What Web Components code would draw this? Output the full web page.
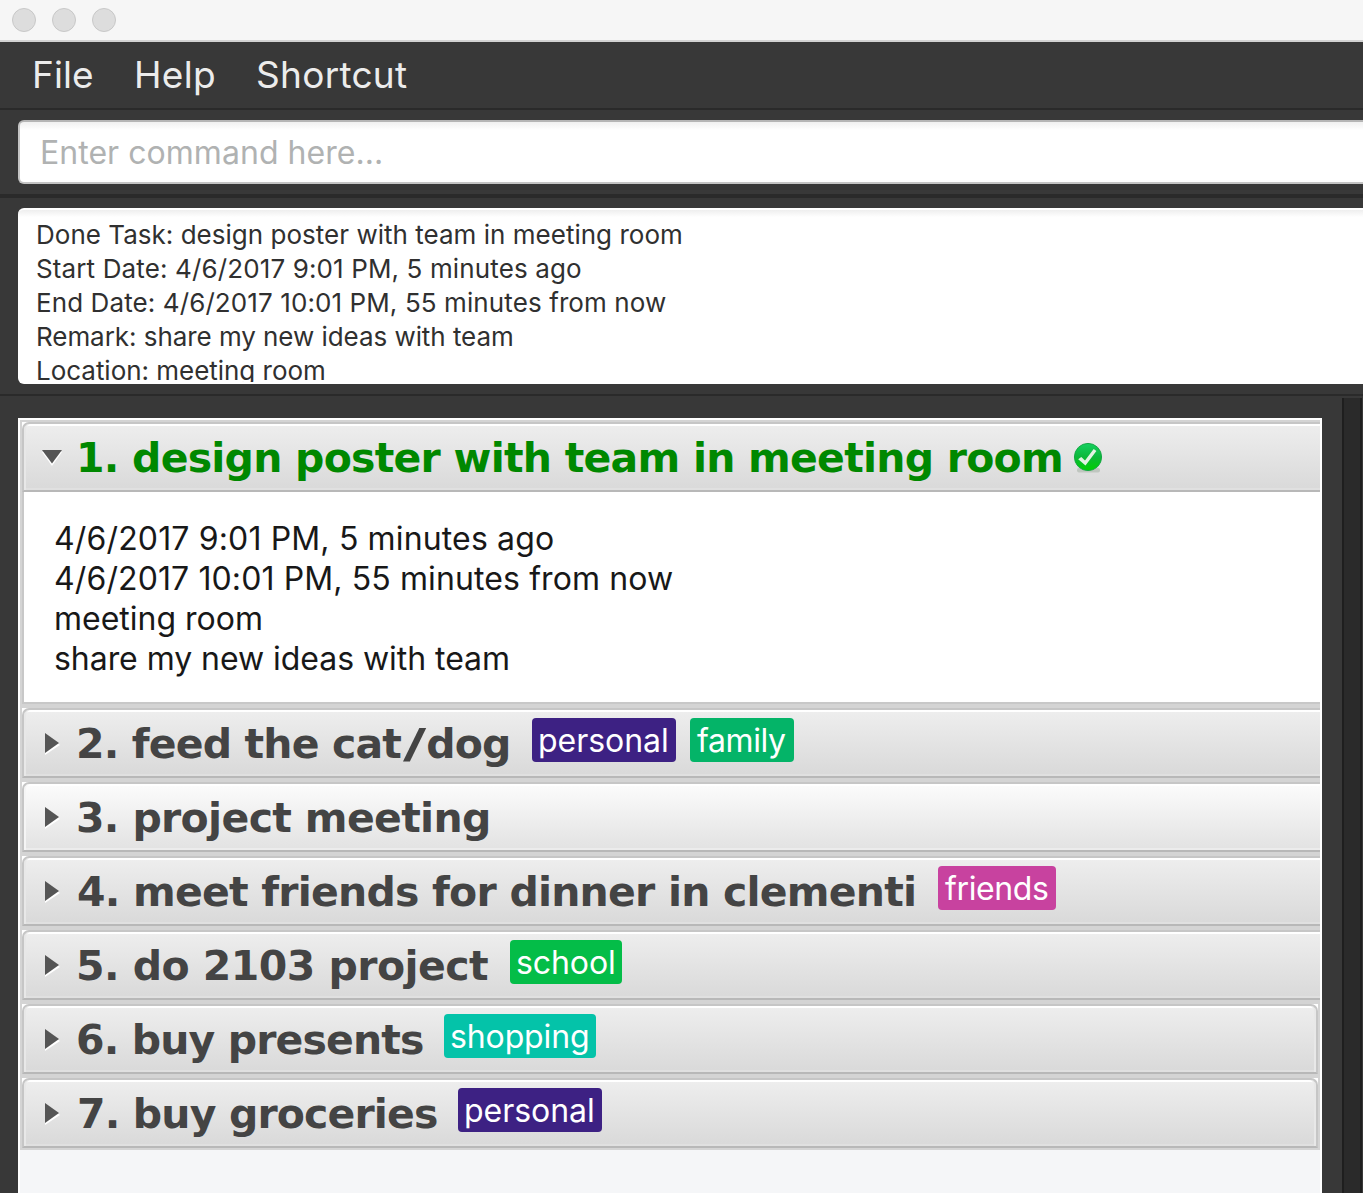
<!DOCTYPE html>
<html lang="en">
<head>
<meta charset="utf-8">
<title>Task Manager</title>
<style>
html,body{margin:0;height:1193px;overflow:hidden;background:#383838}
body{font-family:Inter,"Liberation Sans",sans-serif}
</style>
</head>
<body>
<task-window></task-window>
<script>
const def=(name,html,setup)=>{
  const t=document.createElement('template');t.innerHTML=html;
  customElements.define(name,class extends HTMLElement{
    connectedCallback(){
      if(this.shadowRoot)return;
      this.attachShadow({mode:'open'}).append(t.content.cloneNode(true));
      if(setup)setup(this,this.shadowRoot);
    }
  });
};
const ctx=document.createElement('canvas').getContext('2d');

// A single line of text tracked so that its ink fills the width in "w".
// "pad" widens the slashes in the text by that many pixels on each side.
def('fit-text',`<style>:host{display:block;white-space:pre;flex:none}::slotted(span){display:inline-block;transform:scaleX(1.55)}</style><slot></slot>`,el=>{
  const cs=getComputedStyle(el),s=el.textContent,w=+el.getAttribute('w'),pad=+el.getAttribute('pad')||0;
  ctx.font=`${cs.fontWeight} ${cs.fontSize} ${cs.fontFamily}`;
  const m=ctx.measureText(s),ink=m.actualBoundingBoxLeft+m.actualBoundingBoxRight;
  el.style.width=w+'px';
  el.style.textIndent=m.actualBoundingBoxLeft+'px';
  el.style.letterSpacing=(w-2*pad-ink)/(s.length-1)+'px';
  if(pad){
    const [a,b]=s.split('/'),sl=document.createElement('span');
    sl.textContent='/';sl.style.margin=`0 ${pad}px`;sl.style.textIndent='0';
    el.replaceChildren(a,sl,b);
  }
});

def('title-bar',`<style>
:host{display:flex;box-sizing:border-box;height:42px;flex:none;padding:8px 12px 0;gap:16px;background:#f6f6f6;border-bottom:2px solid #d2d2d2}
i{width:24px;height:24px;box-sizing:border-box;border-radius:50%;background:#dddddd;border:1px solid #c8c8c8}
</style><i></i><i></i><i></i>`);

def('menu-bar',`<style>
:host{display:flex;box-sizing:border-box;height:68px;flex:none;padding-left:35px;border-bottom:2px solid #2a2a2a;background:#383838;color:#ececec;font-size:37px;line-height:65px}
.help{margin-left:45px}.short{margin-left:44px}
</style><fit-text w="57">File</fit-text><fit-text class="help" w="77">Help</fit-text><fit-text class="short" w="149">Shortcut</fit-text>`);

def('command-box',`<style>
:host{display:block;box-sizing:border-box;height:88px;flex:none;padding:10px 0 0 18px;border-bottom:4px solid #2a2a2a}
div{box-sizing:border-box;height:64px;border:2px solid #c4c4c4;border-top-color:#b5b5b5;border-right:0;border-radius:6px 0 0 6px;background:linear-gradient(#f0f0f0,#fff 8px);padding-left:22px;font-size:32px;line-height:61px;color:#b0b2b2}
</style><div><fit-text w="339">Enter command here...</fit-text></div>`);

def('result-display',`<style>
:host{display:block;box-sizing:border-box;height:198px;flex:none;padding:10px 0 0 18px;border-bottom:2px solid #2a2a2a}
.box{box-sizing:border-box;height:176px;border-radius:6px 0 0 6px;border-top:2px solid #fff;background:linear-gradient(#eee,#fff 7px);padding:8px 0 0}
.clip{box-sizing:border-box;height:164px;padding-left:20px;overflow:hidden;font-size:26px;line-height:34px;color:#303030}
.s{margin-left:-1px}
</style><div class="box"><div class="clip">
<fit-text w="643">Done Task: design poster with team in meeting room</fit-text>
<fit-text class="s" w="544">Start Date: 4/6/2017 9:01 PM, 5 minutes ago</fit-text>
<fit-text w="628">End Date: 4/6/2017 10:01 PM, 55 minutes from now</fit-text>
<fit-text w="474">Remark: share my new ideas with team</fit-text>
<fit-text w="286">Location: meeting room</fit-text>
</div></div>`);

def('task-tag',`<style>
:host{display:block;box-sizing:border-box;flex:none;height:44px;margin-top:8px;border-radius:4px;padding-left:7px;background:var(--c);color:#fff;font-size:32px;line-height:45px}
:host(.p){padding-left:8px}
</style><slot></slot>`);

def('done-icon',`<style>:host{display:block;flex:none;margin:18px 0 0 12px}svg{display:block}</style>
<svg width="32" height="34" viewBox="0 0 32 34">
<defs><linearGradient id="g" x1="0" y1="0" x2="0" y2="1"><stop offset="0" stop-color="#14d060"/><stop offset=".5" stop-color="#0cb83a"/><stop offset="1" stop-color="#00d000"/></linearGradient></defs>
<rect x="4" y="26" width="23" height="4.5" rx="2" fill="#bfc6bf"/>
<circle cx="15" cy="15" r="13.6" fill="url(#g)" stroke="#16a846" stroke-width="1"/>
<path d="M5.2 17.2 L8.3 14.9 L12 18.4 L20.7 7 L23.4 9 L12.5 23.4 Z" fill="#e2f3e2"/>
</svg>`);

def('task-card',`<style>
:host{display:block;flex:none;padding:2px 0 2px 2px;background:#d4d4d4}
:host([short]){padding-right:2px}
.edge{background:#fff}
.title{display:flex;align-items:flex-start;box-sizing:border-box;height:70px;border:2px solid #c6c6c6;border-right:0;border-bottom-color:#b8b8b8;border-radius:7px 0 0 0;
 background:linear-gradient(#eee,#d9d9d9);box-shadow:inset 2px 0 #e8e8e8,inset 0 2px #fff,inset 0 -2px #e0e0e0;font:bold 41px/68px "DejaVu Sans",sans-serif;color:#444}
:host([light]) .title{background:linear-gradient(#fcfcfc,#e2e2e2);box-shadow:inset 2px 0 #f5f5f5,inset 0 2px #fff,inset 0 -2px #ececec}
:host([short]) .title{border-right:2px solid #c6c6c6;border-radius:7px 7px 0 0;box-shadow:inset 2px 0 #e8e8e8,inset -2px 0 #e8e8e8,inset 0 2px #fff,inset 0 -2px #e0e0e0}
:host([open]) .title{color:#080}
svg{flex:none;display:block;width:54px;height:66px}
.down{display:none}
:host([open]) .down{display:inline}:host([open]) .right{display:none}
.title ::slotted(*){font-family:Inter,sans-serif;font-weight:400}
.name{display:block}
.body{display:none;box-sizing:border-box;height:212px;padding:27px 0 0 31px;background:#fff;border-left:2px solid #c8c8c8;border-bottom:2px solid #c8c8c8;font-size:32px;line-height:40px;color:#181818}
:host([open]) .body{display:block}
</style>
<div class="edge"><div class="title"><svg viewBox="0 0 54 66">
<g class="right"><path d="M21 25 L36 35 L21 45Z" fill="#fff"/><path d="M21 23 L35 33 L21 43Z" fill="#555"/></g>
<g class="down"><path d="M18 28 L38 28 L28 42Z" fill="#fff"/><path d="M18 26 L38 26 L28 39.5Z" fill="#555"/></g>
</svg><span class="name"></span><slot name="extra"></slot></div></div>
<div class="body"><slot></slot></div>`,(el,r)=>{
  const t=document.createElement('fit-text');
  t.setAttribute('w',el.getAttribute('w'));
  if(el.hasAttribute('pad'))t.setAttribute('pad',el.getAttribute('pad'));
  t.textContent=el.getAttribute('name');
  r.querySelector('.name').style.marginLeft=(el.getAttribute('x')-78)+'px';
  r.querySelector('.name').append(t);
});

def('task-list',`<style>
:host{display:flex;flex-direction:column;box-sizing:border-box;width:1304px;flex:none;margin:22px 20px 0 18px;border:2px solid #fff;border-bottom:0;background:#f5f6f8}
.a{margin-left:1px}
</style>
<task-card open name="1. design poster with team in meeting room" x="80" w="981"><done-icon slot="extra"></done-icon>
<fit-text w="498">4/6/2017 9:01 PM, 5 minutes ago</fit-text>
<fit-text w="618">4/6/2017 10:01 PM, 55 minutes from now</fit-text>
<fit-text class="a" w="205">meeting room</fit-text>
<fit-text w="453">share my new ideas with team</fit-text></task-card>
<task-card name="2. feed the cat/dog" x="79" w="429" pad="5.5">
<task-tag class="p" slot="extra" style="--c:#3d2183;width:144px;margin-left:24px"><fit-text w="127">personal</fit-text></task-tag>
<task-tag slot="extra" style="--c:#04b468;width:104px;margin-left:14px"><fit-text w="89">family</fit-text></task-tag></task-card>
<task-card light name="3. project meeting" x="78" w="410"></task-card>
<task-card name="4. meet friends for dinner in clementi" x="78" w="836">
<task-tag slot="extra" style="--c:#c8429f;width:118px;margin-left:24px"><fit-text w="103">friends</fit-text></task-tag></task-card>
<task-card name="5. do 2103 project" x="79" w="409">
<task-tag slot="extra" style="--c:#04bd48;width:112px;margin-left:22px"><fit-text w="97">school</fit-text></task-tag></task-card>
<task-card short name="6. buy presents" x="78" w="345">
<task-tag slot="extra" style="--c:#04c3a9;width:152px;margin-left:21px"><fit-text w="137">shopping</fit-text></task-tag></task-card>
<task-card short name="7. buy groceries" x="79" w="358">
<task-tag class="p" slot="extra" style="--c:#3d2183;width:144px;margin-left:21px"><fit-text w="127">personal</fit-text></task-tag></task-card>`);

def('split-divider',`<style>:host{display:block;box-sizing:border-box;width:20px;margin-top:2px;border:solid #1e1e1e;border-width:0 2px;background:#2a2a2a}</style>`);

def('task-window',`<style>
:host{display:flex;flex-direction:column;width:1363px;height:1193px;overflow:hidden;background:#383838}
main{display:flex;flex:1;min-height:0}
</style><title-bar></title-bar><menu-bar></menu-bar><command-box></command-box><result-display></result-display>
<main><task-list></task-list><split-divider></split-divider></main>`);
</script>
</body>
</html>
